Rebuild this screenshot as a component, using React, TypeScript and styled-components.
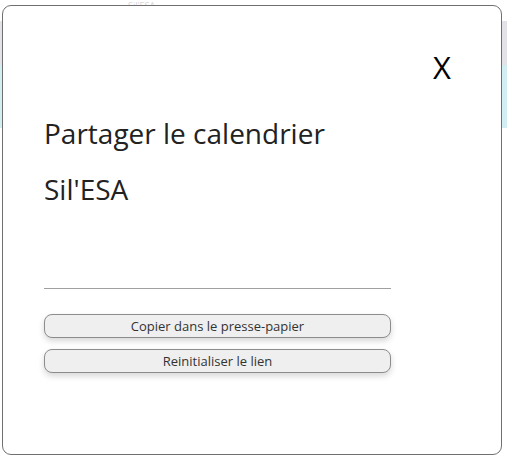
import React from 'react';
import styled, { createGlobalStyle } from 'styled-components';

const GlobalStyle = createGlobalStyle`
  html, body {
    margin: 0;
    padding: 0;
    background: #ffffff;
    font-family: 'Open Sans', 'Noto Sans', sans-serif;
  }
`;

// --- page behind the dialog ---
const Page = styled.div`
  position: relative;
  width: 507px;
  height: 460px;
  overflow: hidden;
  background: #ffffff;
`;

const TopStrip = styled.div`
  height: 21px;
  padding-left: 128px;
  font-size: 9px;
  line-height: 12px;
  color: #d6d6d6;
`;

const GreyBand = styled.div`
  height: 44px;
  background: #e3e3e7;
`;

const CyanBand = styled.div`
  height: 63px;
  background: #d2eef2;
`;

// --- dialog ---
const Dialog = styled.div`
  position: absolute;
  left: 2px;
  top: 5px;
  width: 500px;
  height: 450px;
  box-sizing: border-box;
  background: #ffffff;
  border: 1px solid #707070;
  border-radius: 9px;
  padding: 41px 50px 0 41px;
  display: flex;
  flex-direction: column;
`;

const CloseRow = styled.div`
  display: flex;
  justify-content: flex-end;
`;

const CloseButton = styled.button`
  border: none;
  background: none;
  padding: 0;
  font-family: 'Open Sans', sans-serif;
  font-size: 31px;
  line-height: 40px;
  color: #000000;
  cursor: pointer;
`;

const Body = styled.div`
  width: 347px;
  display: flex;
  flex-direction: column;
`;

const Heading = styled.h2`
  margin: 0;
  font-weight: 400;
  font-size: 28px;
  line-height: 36px;
  color: #222222;
`;

const Title = styled(Heading)`
  margin-top: 28px;
`;

const Subtitle = styled(Heading)`
  margin-top: 20px;
`;

const Divider = styled.hr`
  margin: 81px 0 0 0;
  border: none;
  border-top: 1px solid #a0a0a0;
  height: 0;
`;

const Actions = styled.div`
  margin-top: 25px;
  display: flex;
  flex-direction: column;
  gap: 11px;
`;

const ActionButton = styled.button`
  height: 24px;
  box-sizing: border-box;
  border: 1px solid #8c8c8c;
  border-radius: 8px;
  background: #efefef;
  box-shadow: 0 3px 6px rgba(0, 0, 0, 0.16);
  font-family: 'Open Sans', sans-serif;
  font-size: 13px;
  color: #333333;
  padding: 0;
  cursor: pointer;
`;

export default function App() {
  return (
    <Page>
      <GlobalStyle />
      <TopStrip>Sil'ESA</TopStrip>
      <GreyBand />
      <CyanBand />
      <Dialog>
        <CloseRow>
          <CloseButton>X</CloseButton>
        </CloseRow>
        <Body>
          <Title>Partager le calendrier</Title>
          <Subtitle>Sil'ESA</Subtitle>
          <Divider />
          <Actions>
            <ActionButton>Copier dans le presse-papier</ActionButton>
            <ActionButton>Reinitialiser le lien</ActionButton>
          </Actions>
        </Body>
      </Dialog>
    </Page>
  );
}
